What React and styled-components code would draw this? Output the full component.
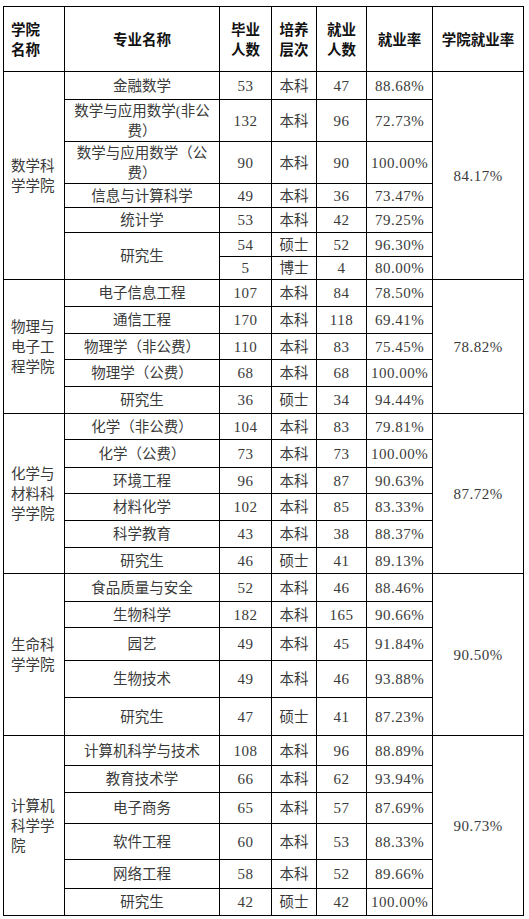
import React from "react";
import styled, { createGlobalStyle } from "styled-components";

const GlobalStyle = createGlobalStyle`
  html, body {
    margin: 0;
    padding: 0;
    background: #fff;
  }
`;

const Page = styled.div`
  padding: 6px 0 0 3px;
`;

const Table = styled.table`
  border-collapse: collapse;
  table-layout: fixed;
  width: 520px;
  font-family: "Liberation Serif", "Noto Sans CJK SC", serif;
  font-size: 14.5px;
  color: #3a3a3a;
`;

const Row = styled.tr`
  height: ${(p) => p.$h}px;
`;

const Head = styled.th`
  border: 1px solid #000;
  padding: 0 ${(p) => (p.$left ? "7px" : "3px")};
  text-align: ${(p) => (p.$left ? "left" : "center")};
  vertical-align: middle;
  font-family: "Noto Sans CJK SC", sans-serif;
  font-weight: 700;
  font-size: 14.5px;
  line-height: 20px;
  color: #111;
`;

const Cell = styled.td`
  border: 1px solid #000;
  padding: 0 ${(p) => (p.$left ? "7px" : p.$num ? "0" : "4px")};
  text-align: ${(p) => (p.$left ? "left" : "center")};
  vertical-align: middle;
  line-height: 20px;
  word-break: ${(p) => (p.$num ? "normal" : "break-all")};
  white-space: ${(p) => (p.$num ? "nowrap" : "normal")};
  font-size: ${(p) => (p.$num ? "15px" : "14.5px")};
  letter-spacing: ${(p) => (p.$num ? "0.5px" : "0")};
`;

const widths = [61, 155, 52, 45, 50, 66, 91];

const data = [
  {
    college: "数学科学学院",
    rate: "84.17%",
    rows: [
      { major: "金融数学", grad: 53, level: "本科", emp: 47, rate: "88.68%", h: 28 },
      { major: "数学与应用数学(非公费）", grad: 132, level: "本科", emp: 96, rate: "72.73%", h: 42 },
      { major: "数学与应用数学（公费）", grad: 90, level: "本科", emp: 90, rate: "100.00%", h: 42 },
      { major: "信息与计算科学", grad: 49, level: "本科", emp: 36, rate: "73.47%", h: 24 },
      { major: "统计学", grad: 53, level: "本科", emp: 42, rate: "79.25%", h: 25 },
      { major: "研究生", span: 2, grad: 54, level: "硕士", emp: 52, rate: "96.30%", h: 24 },
      { major: null, grad: 5, level: "博士", emp: 4, rate: "80.00%", h: 23 },
    ],
  },
  {
    college: "物理与电子工程学院",
    rate: "78.82%",
    rows: [
      { major: "电子信息工程", grad: 107, level: "本科", emp: 84, rate: "78.50%", h: 27 },
      { major: "通信工程", grad: 170, level: "本科", emp: 118, rate: "69.41%", h: 27 },
      { major: "物理学（非公费）", grad: 110, level: "本科", emp: 83, rate: "75.45%", h: 26 },
      { major: "物理学（公费）", grad: 68, level: "本科", emp: 68, rate: "100.00%", h: 27 },
      { major: "研究生", grad: 36, level: "硕士", emp: 34, rate: "94.44%", h: 27 },
    ],
  },
  {
    college: "化学与材料科学学院",
    rate: "87.72%",
    rows: [
      { major: "化学（非公费）", grad: 104, level: "本科", emp: 83, rate: "79.81%", h: 26 },
      { major: "化学（公费）", grad: 73, level: "本科", emp: 73, rate: "100.00%", h: 28 },
      { major: "环境工程", grad: 96, level: "本科", emp: 87, rate: "90.63%", h: 26 },
      { major: "材料化学", grad: 102, level: "本科", emp: 85, rate: "83.33%", h: 27 },
      { major: "科学教育", grad: 43, level: "本科", emp: 38, rate: "88.37%", h: 27 },
      { major: "研究生", grad: 46, level: "硕士", emp: 41, rate: "89.13%", h: 26 },
    ],
  },
  {
    college: "生命科学学院",
    rate: "90.50%",
    rows: [
      { major: "食品质量与安全", grad: 52, level: "本科", emp: 46, rate: "88.46%", h: 28 },
      { major: "生物科学", grad: 182, level: "本科", emp: 165, rate: "90.66%", h: 26 },
      { major: "园艺", grad: 49, level: "本科", emp: 45, rate: "91.84%", h: 33 },
      { major: "生物技术", grad: 49, level: "本科", emp: 46, rate: "93.88%", h: 37 },
      { major: "研究生", grad: 47, level: "硕士", emp: 41, rate: "87.23%", h: 38 },
    ],
  },
  {
    college: "计算机科学学院",
    rate: "90.73%",
    rows: [
      { major: "计算机科学与技术", grad: 108, level: "本科", emp: 96, rate: "88.89%", h: 30 },
      { major: "教育技术学", grad: 66, level: "本科", emp: 62, rate: "93.94%", h: 27 },
      { major: "电子商务", grad: 65, level: "本科", emp: 57, rate: "87.69%", h: 31 },
      { major: "软件工程", grad: 60, level: "本科", emp: 53, rate: "88.33%", h: 36 },
      { major: "网络工程", grad: 58, level: "本科", emp: 52, rate: "89.66%", h: 29 },
      { major: "研究生", grad: 42, level: "硕士", emp: 42, rate: "100.00%", h: 27 },
    ],
  },
];

const College = ({ group }) =>
  group.rows.map((r, i) => (
    <Row key={i} $h={r.h}>
      {i === 0 && (
        <Cell $left rowSpan={group.rows.length}>
          {group.college}
        </Cell>
      )}
      {r.major !== null && <Cell rowSpan={r.span || 1}>{r.major}</Cell>}
      <Cell $num>{r.grad}</Cell>
      <Cell>{r.level}</Cell>
      <Cell $num>{r.emp}</Cell>
      <Cell $num>{r.rate}</Cell>
      {i === 0 && (
        <Cell $num rowSpan={group.rows.length}>
          {group.rate}
        </Cell>
      )}
    </Row>
  ));

export default function App() {
  return (
    <>
      <GlobalStyle />
      <Page>
        <Table>
          <colgroup>
            {widths.map((w, i) => (
              <col key={i} style={{ width: w }} />
            ))}
          </colgroup>
          <thead>
            <Row $h={65}>
              <Head $left>
                学院
                <br />
                名称
              </Head>
              <Head>专业名称</Head>
              <Head>
                毕业
                <br />
                人数
              </Head>
              <Head>
                培养
                <br />
                层次
              </Head>
              <Head>
                就业
                <br />
                人数
              </Head>
              <Head>就业率</Head>
              <Head>学院就业率</Head>
            </Row>
          </thead>
          <tbody>
            {data.map((g) => (
              <College key={g.college} group={g} />
            ))}
          </tbody>
        </Table>
      </Page>
    </>
  );
}
